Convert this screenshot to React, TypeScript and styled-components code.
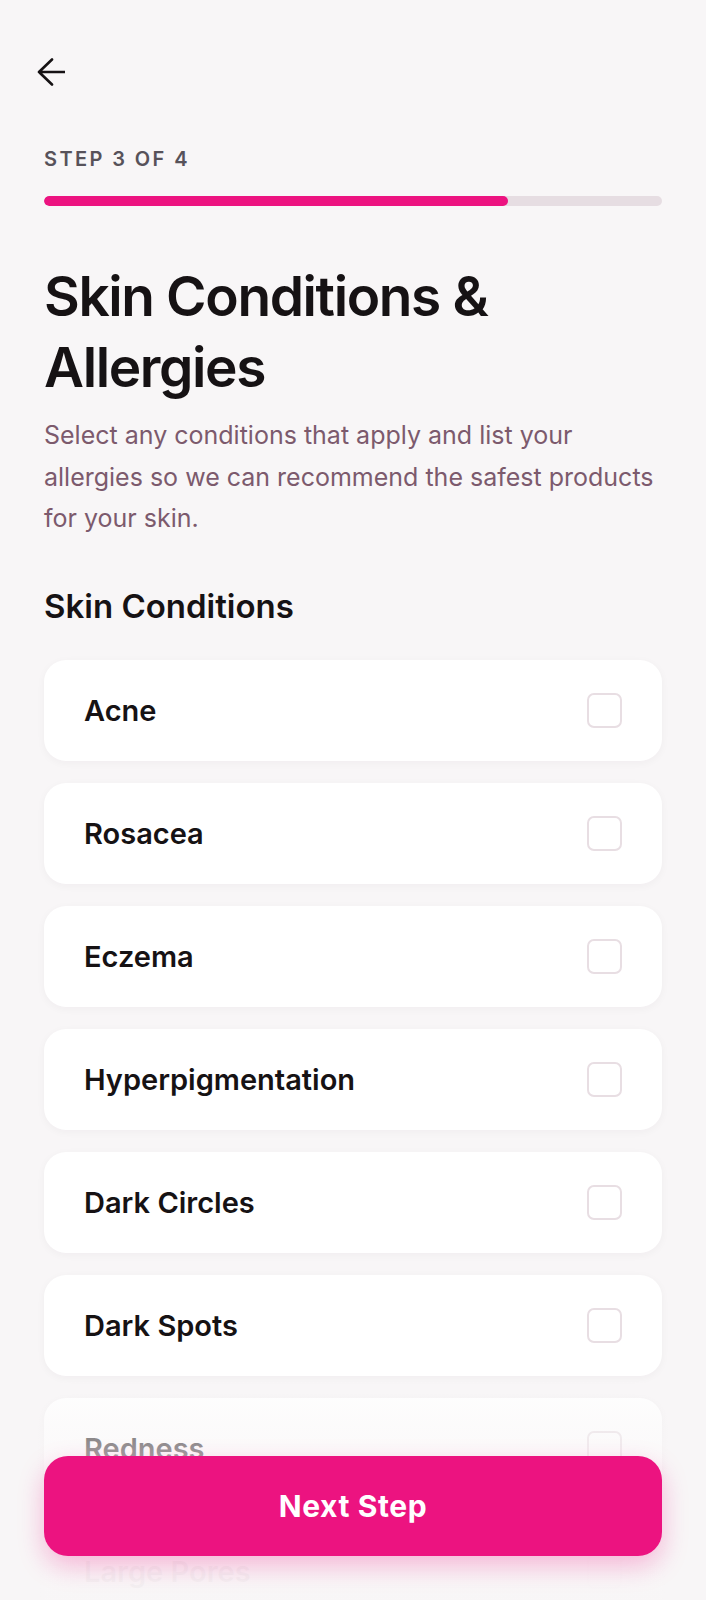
import React from "react";
import styled, { createGlobalStyle } from "styled-components";

const GlobalStyle = createGlobalStyle`
  html, body {
    margin: 0;
    padding: 0;
    background: #f8f6f7;
  }
  * {
    box-sizing: border-box;
  }
`;

const Screen = styled.div`
  position: relative;
  width: 706px;
  height: 1600px;
  overflow: hidden;
  background: #f8f6f7;
  font-family: Inter, "Noto Sans", sans-serif;
  color: #161214;
`;

const Content = styled.div`
  display: flex;
  flex-direction: column;
  padding: 58px 44px 0;
`;

const BackButton = styled.button`
  display: flex;
  align-items: center;
  justify-content: center;
  width: 28px;
  height: 28px;
  margin-left: -7px;
  padding: 0;
  border: none;
  background: none;
  color: #161214;
  cursor: pointer;
`;

const StepLabel = styled.div`
  margin-top: 61px;
  font-size: 20px;
  line-height: 24px;
  font-weight: 600;
  letter-spacing: 0.12em;
  color: #57525a;
`;

const Track = styled.div`
  margin-top: 25px;
  height: 10px;
  border-radius: 5px;
  background: #e6dde2;
  overflow: hidden;
`;

const Fill = styled.div`
  height: 100%;
  border-radius: 5px;
  background: #ec1380;
`;

const Title = styled.h1`
  margin: 55px 0 0;
  font-size: 55px;
  line-height: 71px;
  font-weight: 600;
  letter-spacing: -0.025em;
  color: #161214;
`;

const Description = styled.p`
  margin: 12px 0 0;
  font-size: 25px;
  line-height: 41.5px;
  font-weight: 400;
  color: #7c5a6d;
  white-space: nowrap;
`;

const SectionTitle = styled.h2`
  margin: 46px 0 0;
  font-size: 33px;
  line-height: 40px;
  font-weight: 600;
  color: #161214;
`;

const OptionList = styled.div`
  display: flex;
  flex-direction: column;
  gap: 22px;
  margin-top: 34px;
`;

const OptionCard = styled.label`
  display: flex;
  align-items: center;
  justify-content: space-between;
  height: 101px;
  padding: 0 40px;
  border-radius: 22px;
  background: #ffffff;
  box-shadow: 0 2px 8px rgba(60, 30, 45, 0.04);
  cursor: pointer;
`;

const OptionText = styled.span`
  font-size: 29px;
  font-weight: 600;
  color: #161214;
`;

const Checkbox = styled.span`
  width: 35px;
  height: 35px;
  border: 2.5px solid #e8dee3;
  border-radius: 7px;
  background: #ffffff;
`;

const BottomBar = styled.div`
  position: absolute;
  left: 0;
  right: 0;
  bottom: 0;
  height: 225px;
  display: flex;
  align-items: flex-end;
  padding: 0 44px 44px;
  background: linear-gradient(
    to bottom,
    rgba(248, 246, 247, 0) 0px,
    rgba(248, 246, 247, 0.45) 50px,
    rgba(248, 246, 247, 0.96) 150px,
    rgba(248, 246, 247, 0.98) 100%
  );
`;

const PrimaryButton = styled.button`
  width: 100%;
  height: 100px;
  border: none;
  border-radius: 24px;
  background: #ec1380;
  color: #ffffff;
  font-family: Inter, "Noto Sans", sans-serif;
  font-size: 30px;
  font-weight: 700;
  letter-spacing: 0.02em;
  box-shadow: 0 10px 26px rgba(236, 19, 128, 0.28);
  cursor: pointer;
`;

const ArrowLeft = () => (
  <svg width="28" height="28" viewBox="0 0 28 28" fill="none">
    <path
      d="M15 1.5L2 14l13 12.5M2 14h25.5"
      stroke="currentColor"
      strokeWidth="2.6"
      strokeLinecap="round"
      strokeLinejoin="round"
    />
  </svg>
);

const conditions = [
  "Acne",
  "Rosacea",
  "Eczema",
  "Hyperpigmentation",
  "Dark Circles",
  "Dark Spots",
  "Redness",
  "Large Pores",
];

const App = () => {
  const progress = 75;
  return (
    <Screen>
      <GlobalStyle />
      <Content>
        <BackButton aria-label="Back">
          <ArrowLeft />
        </BackButton>
        <StepLabel>STEP 3 OF 4</StepLabel>
        <Track>
          <Fill style={{ width: `${progress}%` }} />
        </Track>
        <Title>
          Skin Conditions &amp;
          <br />
          Allergies
        </Title>
        <Description>
          Select any conditions that apply and list your
          <br />
          allergies so we can recommend the safest products
          <br />
          for your skin.
        </Description>
        <SectionTitle>Skin Conditions</SectionTitle>
        <OptionList>
          {conditions.map(item => (
            <OptionCard key={item}>
              <OptionText>{item}</OptionText>
              <Checkbox />
            </OptionCard>
          ))}
        </OptionList>
      </Content>
      <BottomBar>
        <PrimaryButton>Next Step</PrimaryButton>
      </BottomBar>
    </Screen>
  );
};

export default App;
